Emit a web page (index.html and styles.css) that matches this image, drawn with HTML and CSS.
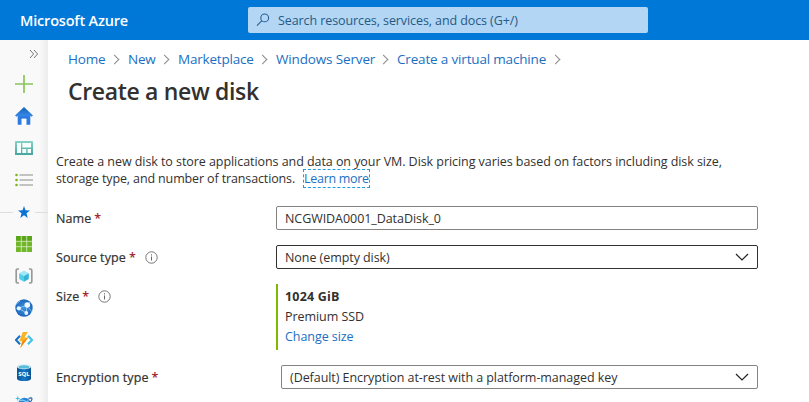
FILE: index.html
```html
<!DOCTYPE html>
<html lang="en">
<head>
<meta charset="utf-8">
<title>Create a new disk - Microsoft Azure</title>
<link rel="stylesheet" href="styles.css">
</head>
<body>
<header class="topbar">
  <div class="brand"><span>Microsoft Azure</span></div>
  <div class="search">
    <svg width="14" height="14" viewBox="0 0 14 14" fill="none" stroke="#2a6196" stroke-width="1.1"><circle cx="8.7" cy="4.9" r="3.9"/><path d="M5.9 7.7L1 12.6"/></svg>
    <span>Search resources, services, and docs (G+/)</span>
  </div>
</header>
<div class="shell">
  <nav class="rail">
    <div class="expand"><svg width="10" height="10" viewBox="0 0 10 10" fill="none" stroke="#777" stroke-width="1"><path d="M1 1l3.6 4L1 9M5 1l3.6 4L5 9"/></svg></div>
    <div class="item"><svg width="18" height="18" viewBox="0 0 18 18"><path d="M9 0v18M0 9h18" stroke="#8bc45c" stroke-width="1.7"/></svg></div>
    <div class="item"><svg width="18" height="18" viewBox="0 0 18 18"><defs><linearGradient id="roof" x2="0" y2="1"><stop offset="0" stop-color="#1262b5"/><stop offset="1" stop-color="#3b8cec"/></linearGradient></defs><path d="M2.7 8h12.6v9.2a.6.6 0 0 1-.6.6h-3.4v-6H6.7v6H3.3a.6.6 0 0 1-.6-.6z" fill="#2d7be0"/><path d="M9 0l9 8.4-1.4 1.3L15.3 9H2.7l-1.3.7L0 8.4z" fill="url(#roof)"/><path d="M6.7 11.8h4.6v6H6.7z" fill="#fff"/></svg></div>
    <div class="item"><svg width="18" height="14" viewBox="0 0 18 14"><defs><linearGradient id="dash" x2="0" y2="1"><stop offset="0" stop-color="#86d3c6"/><stop offset="1" stop-color="#45a59c"/></linearGradient></defs><rect width="18" height="14" rx=".6" fill="url(#dash)"/><path d="M2 2h4v10H2zM7.3 2H16v4.5H7.3zM7.3 8h4v4h-4zM12.6 8H16v4h-3.4z" fill="#f7ffff"/></svg></div>
    <div class="item"><svg width="18" height="14" viewBox="0 0 18 14"><path d="M4.5 2H18M4.5 7H18M4.5 12H18" stroke="#8b8b8b" stroke-width="1.2"/><g fill="#79b51d"><circle cx="1.5" cy="2" r="1.3"/><circle cx="1.5" cy="7" r="1.3"/><circle cx="1.5" cy="12" r="1.3"/></g></svg></div>
    <div class="item favorite"><svg width="12" height="12" viewBox="0 0 12 12"><path d="M6 0l1.5 4.2 4.5.2-3.5 2.8L9.7 12 6 9.3 2.3 12l1.2-4.8L0 4.4l4.5-.2z" fill="#0c73d2"/></svg></div>
    <div class="item"><svg width="16" height="16" viewBox="0 0 16 16"><rect width="16" height="16" rx=".6" fill="#70b52a"/><path d="M0 0h16v5H0z" fill="#5ba51b"/><path d="M5.3 0v16M10.7 0v16M0 5.3h16M0 10.7h16" stroke="#d9efbf" stroke-width=".8"/></svg></div>
    <div class="item"><svg width="18" height="16" viewBox="0 0 18 16"><path d="M4 1H2.6Q1.2 1 1.2 2.5v11Q1.2 15 2.6 15H4M14 1h1.4q1.4 0 1.4 1.5v11q0 1.5-1.4 1.5H14" fill="none" stroke="#999" stroke-width="1.7"/><path d="M9 2.5l4.8 2.7L9 8 4.2 5.2z" fill="#a0e8f5"/><path d="M4.2 5.2L9 8v5.7L4.2 11z" fill="#50cde7"/><path d="M13.8 5.2L9 8v5.7l4.8-2.7z" fill="#32b5d7"/></svg></div>
    <div class="item"><svg width="18" height="18" viewBox="0 0 18 18"><defs><radialGradient id="globe"><stop offset="0" stop-color="#4391df"/><stop offset="1" stop-color="#1d66bd"/></radialGradient></defs><circle cx="9" cy="9" r="8.7" fill="url(#globe)"/><path d="M3.5 9.3L12 6M3.5 9.3l7.8 4.5L12 6l3-3" fill="none" stroke="#9dd5f5" stroke-width=".8"/><path d="M1 5.5L5 2M14 9l3 4" stroke="#72bdf0"/><circle cx="3.8" cy="9.3" r="2.1" fill="#e5f8ff"/><circle cx="12.3" cy="6" r="2.8" fill="#edfaff"/><circle cx="11.3" cy="14" r="1.9" fill="#e5f8ff"/></svg></div>
    <div class="item"><svg width="18" height="16" viewBox="0 0 18 16"><path d="M5 3.7L1 8l4 4.3" fill="none" stroke="#1472c7" stroke-width="2"/><path d="M13 3.7L17 8l-4 4.3" fill="none" stroke="#40c2e6" stroke-width="2"/><path d="M7.8 0h5l-3.3 5.6h3.8L5.3 16l2-6.8H4.2z" fill="#fbb224"/><path d="M13.3 5.6L5.3 16l2-6.8z" fill="#f48b12"/></svg></div>
    <div class="item"><svg width="14" height="17" viewBox="0 0 14 17"><defs><linearGradient id="db"><stop offset="0" stop-color="#075591"/><stop offset=".5" stop-color="#1877c7"/><stop offset="1" stop-color="#075591"/></linearGradient></defs><path d="M0 2.5v12C0 18 14 18 14 14.5v-12z" fill="url(#db)"/><ellipse cx="7" cy="2.7" rx="7" ry="2.6" fill="#d8edf6"/><ellipse cx="7" cy="2.9" rx="5.4" ry="1.6" fill="#56bdd9"/><text x="7" y="11.8" class="db-label">SQL</text></svg></div>
    <div class="item"><svg width="18" height="18" viewBox="0 0 18 18"><circle cx="9.5" cy="9" r="6.3" fill="#2486d8"/><path d="M4.5 5.8q3-1.500 5 0t4 0" fill="none" stroke="#80c9f1" stroke-width="1.2"/><path d="M2.700 1.500v4M.7 3.500h4" stroke="#45c4e8" stroke-width="1.200"/><path d="M13.500 3.500Q17 2 17 4T12 10" fill="none" stroke="#2a5f9c" stroke-width="1.100"/></svg></div>
  </nav>
  <main class="page">
    <div class="crumbs">
      <a class="c1">Home</a><i></i><a class="c2">New</a><i></i><a class="c3">Marketplace</a><i></i><a class="c4">Windows Server</a><i></i><a class="c5">Create a virtual machine</a><i></i>
    </div>
    <h1>Create a new disk</h1>
    <p class="intro"><span>Create a new disk to store applications and data on your VM. Disk pricing varies based on factors including disk size,</span><br><span class="line-two">storage type, and number of transactions.</span><a class="learn">Learn more</a></p>
    <div class="row">
      <div class="label"><span>Name</span><b>*</b></div>
      <div class="field"><span>NCGWIDA0001_DataDisk_0</span></div>
    </div>
    <div class="row">
      <div class="label"><span>Source type</span><b>*</b><svg class="info" width="13" height="13" viewBox="0 0 13 13"><circle cx="6.5" cy="6.5" r="5.7" fill="none" stroke="#666" stroke-width=".9"/><path d="M6.5 5.5v4M6.5 3.3v1.2" stroke="#666"/></svg></div>
      <div class="field dark"><span>None (empty disk)</span><svg width="14" height="8" viewBox="0 0 14 8"><path d="M1 1l6 6 6-6" fill="none" stroke="#222" stroke-width="1.2"/></svg></div>
    </div>
    <div class="row size">
      <div class="label"><span>Size</span><b>*</b><svg class="info" width="13" height="13" viewBox="0 0 13 13"><circle cx="6.5" cy="6.5" r="5.7" fill="none" stroke="#666" stroke-width=".9"/><path d="M6.5 5.5v4M6.5 3.3v1.2" stroke="#666"/></svg></div>
      <div class="disk"><strong>1024 GiB</strong><span>Premium SSD</span><a>Change size</a></div>
    </div>
    <div class="row">
      <div class="label"><span>Encryption type</span><b>*</b></div>
      <div class="field inset"><span>(Default) Encryption at-rest with a platform-managed key</span><svg width="14" height="8" viewBox="0 0 14 8"><path d="M1 1l6 6 6-6" fill="none" stroke="#222" stroke-width="1.2"/></svg></div>
    </div>
  </main>
</div>
</body>
</html>
```
FILE: styles.css
```css
* { box-sizing: border-box; }
body {
  margin: 0;
  width: 809px;
  height: 402px;
  overflow: hidden;
  background: #fff;
  color: #323130;
  font: 12.5px/17px "Open Sans", "Noto Sans", sans-serif;
  letter-spacing: -0.06px;
  white-space: nowrap;
}
svg { display: block; flex: none; }
a { color: #1b6fc2; }

.topbar { display: flex; align-items: center; height: 40px; background: #0078d7; }
.brand { width: 248px; padding-left: 20px; color: #fff; font-size: 14.5px; font-weight: 600; letter-spacing: -0.18px; }
.search { display: flex; align-items: center; width: 400px; height: 26px; padding-left: 8px; gap: 8px; background: #b2d6f3; color: #275985; border-radius: 2px; letter-spacing: -0.09px; }

.shell { display: flex; height: 362px; }
.rail { flex: none; width: 48px; overflow: hidden; background: linear-gradient(90deg, #f9f9f9 40px, #ececec); }
.expand { height: 28px; padding: 9px 0 0 29px; }
.item { display: flex; align-items: center; justify-content: center; height: 32px; }
.favorite { gap: 5px; }
.favorite::before, .favorite::after { content: ""; flex: 1; height: 1px; background: #dedede; }
.db-label { fill: #fff; font: 700 6px "Open Sans", sans-serif; text-anchor: middle; letter-spacing: 0; }

.page { flex: 1; padding: 9px 0 0 8px; }
.crumbs { display: flex; align-items: center; height: 20px; padding-left: 12px; font-size: 13.5px; letter-spacing: -0.2px; }
.crumbs a { flex: none; }
.c1 { width: 37px; }
.c2 { width: 27px; }
.c3 { width: 75px; }
.c4 { width: 98px; letter-spacing: -0.15px; }
.c5 { width: 149px; letter-spacing: -0.17px; }
.crumbs i { width: 7px; height: 7px; margin: 0 10px 0 6px; border: solid #8a8a8a; border-width: 1px 1px 0 0; transform: rotate(45deg); }
h1 { margin: 5px 0 0 12px; font-size: 23px; line-height: 34px; font-weight: 600; letter-spacing: -0.33px; }
.intro { margin: 45px 0 19px; }
.line-two { letter-spacing: -0.13px; }
.learn { display: inline-block; width: 65px; height: 17px; margin-left: 9px; outline: 1px dashed #1b9de2; letter-spacing: -0.3px; }

.row { display: flex; height: 24px; margin-bottom: 15px; }
.label { display: flex; align-items: center; flex: none; width: 220px; height: 24px; letter-spacing: 0.1px; -webkit-text-stroke: 0.2px #323130; }
.label b { margin-left: 3px; color: #a4262c; font-weight: 600; -webkit-text-stroke: 0; }
.info { margin-left: 9px; }
.field { display: flex; align-items: center; justify-content: space-between; width: 482px; height: 24px; padding: 0 8px; border: 1px solid #858381; border-radius: 2px; }
.dark { border-color: #323130; }
.inset { width: 477px; margin-left: 5px; }
.size { height: 66px; }
.disk { display: flex; flex-direction: column; padding: 3px 0 0 7px; border-left: 2px solid #7fba00; line-height: 20px; }
.disk strong { font-weight: 700; letter-spacing: 0.2px; }
```
